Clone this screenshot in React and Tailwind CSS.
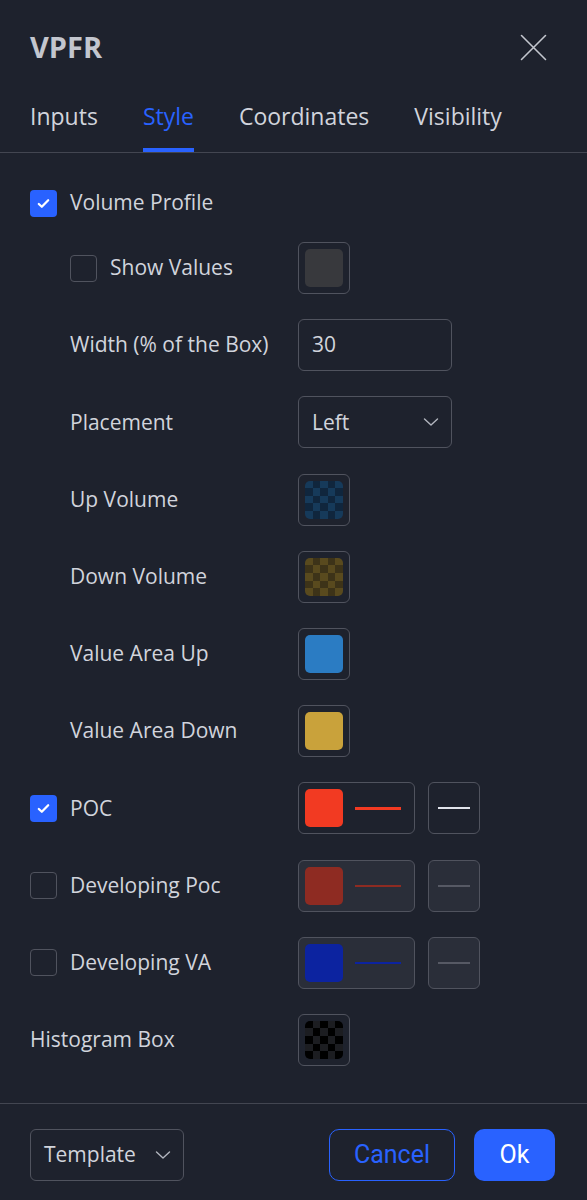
import React from 'react';

const font = { fontFamily: '"Open Sans", "DejaVu Sans", sans-serif' };

function Check({ checked }) {
  if (checked) {
    return (
      <div className="flex h-[27px] w-[27px] shrink-0 items-center justify-center rounded-[4px] bg-[#2962ff]">
        <svg width="15" height="15" viewBox="0 0 16 16" fill="none">
          <path d="M3 8.5l3.2 3L13 4.5" stroke="#fff" strokeWidth="2.4" strokeLinecap="round" strokeLinejoin="round" />
        </svg>
      </div>
    );
  }
  return <div className="h-[27px] w-[27px] shrink-0 rounded-[4px] border-[1.5px] border-[#50535e]" />;
}

function Chevron() {
  return (
    <svg width="16" height="10" viewBox="0 0 16 10" fill="none">
      <path d="M1.5 2l6.5 6 6.5-6" stroke="#b2b5be" strokeWidth="1.4" strokeLinecap="round" strokeLinejoin="round" />
    </svg>
  );
}

// checkerboard swatch, 5x5 cells
function Checker({ a, b }) {
  const cells = [];
  for (let i = 0; i < 25; i++) {
    const dark = (Math.floor(i / 5) + (i % 5)) % 2 === 0;
    cells.push(<div key={i} style={{ background: dark ? a : b }} />);
  }
  return <div className="grid h-[38px] w-[38px] grid-cols-5 grid-rows-5 overflow-hidden rounded-[5px]">{cells}</div>;
}

function Swatch({ children }) {
  return (
    <div className="flex h-[52px] w-[52px] items-center justify-center rounded-[6px] border-[1.5px] border-[#50535e]">
      {children}
    </div>
  );
}

function Solid({ color }) {
  return <div className="h-[38px] w-[38px] rounded-[5px]" style={{ background: color }} />;
}

function LineCombo({ color, disabled, thick }) {
  return (
    <div className="flex items-center gap-[13px]">
      <div
        className={`flex h-[52px] w-[117px] items-center gap-[12px] rounded-[6px] border-[1.5px] border-[#50535e] pl-[6px] ${disabled ? 'bg-[#2a2e39]' : ''}`}
      >
        <div className="h-[38px] w-[38px] rounded-[5px]" style={{ background: color }} />
        <div className={`w-[46px] ${thick ? 'h-[3px]' : 'h-[2px]'}`} style={{ background: color }} />
      </div>
      <div
        className={`flex h-[52px] w-[52px] items-center justify-center rounded-[6px] border-[1.5px] border-[#50535e] ${disabled ? 'bg-[#2a2e39]' : ''}`}
      >
        <div className={`w-[32px] ${disabled ? 'h-[2px] bg-[#565964]' : 'h-[2px] bg-[#e0e3eb]'}`} />
      </div>
    </div>
  );
}

function Row({ label, indent, check, children }) {
  return (
    <div className="flex h-[52px] items-center">
      <div className={`flex w-[268px] items-center gap-[13px] ${indent ? 'pl-[40px]' : ''}`}>
        {check !== undefined && <Check checked={check} />}
        <span className="text-[21px] text-[#d1d4dc]">{label}</span>
      </div>
      {children}
    </div>
  );
}

export default function App() {
  return (
    <div className="h-[1200px] w-[587px] overflow-hidden bg-[#1e222d] text-[#d1d4dc]" style={font}>
      {/* header */}
      <div className="flex h-[94px] items-center justify-between pl-[30px] pr-[40px]">
        <span className="text-[29px] font-bold text-[#c3c6ce]">VPFR</span>
        <svg width="27" height="27" viewBox="0 0 27 27" fill="none">
          <path d="M1.5 1.5l24 24M25.5 1.5l-24 24" stroke="#c3c6ce" strokeWidth="1.6" strokeLinecap="round" />
        </svg>
      </div>

      {/* tabs */}
      <div className="flex h-[59px] items-stretch gap-[45px] border-b-[1.5px] border-[#434651] pl-[30px]">
        {['Inputs', 'Style', 'Coordinates', 'Visibility'].map((t) => (
          <div
            key={t}
            className={`flex items-center border-b-[4px] pb-[10px] text-[23px] ${t === 'Style' ? 'border-[#2962ff] text-[#2962ff]' : 'border-transparent text-[#d1d4dc]'}`}
          >
            {t}
          </div>
        ))}
      </div>

      {/* body */}
      <div className="pl-[30px] pt-[24px]">
        <Row label="Volume Profile" check={true} />
        <div className="mt-[13px] flex flex-col gap-[25.2px]">
          <Row label="Show Values" indent check={false}>
            <Swatch>
              <Solid color="#38393d" />
            </Swatch>
          </Row>
          <Row label="Width (% of the Box)" indent>
            <div className="flex h-[52px] w-[154px] items-center rounded-[6px] border-[1.5px] border-[#50535e] px-[13px] text-[21px]">
              30
            </div>
          </Row>
          <Row label="Placement" indent>
            <div className="flex h-[52px] w-[154px] items-center justify-between rounded-[6px] border-[1.5px] border-[#50535e] pl-[13px] pr-[12px] text-[21px]">
              Left
              <Chevron />
            </div>
          </Row>
          <Row label="Up Volume" indent>
            <Swatch>
              <Checker a="#163a5a" b="#10263d" />
            </Swatch>
          </Row>
          <Row label="Down Volume" indent>
            <Swatch>
              <Checker a="#594a1e" b="#3d3318" />
            </Swatch>
          </Row>
          <Row label="Value Area Up" indent>
            <Swatch>
              <Solid color="#2b7cc3" />
            </Swatch>
          </Row>
          <Row label="Value Area Down" indent>
            <Swatch>
              <Solid color="#c9a23b" />
            </Swatch>
          </Row>
          <Row label="POC" check={true}>
            <LineCombo color="#f23a22" thick />
          </Row>
          <Row label="Developing Poc" check={false}>
            <LineCombo color="#8e2b22" disabled />
          </Row>
          <Row label="Developing VA" check={false}>
            <LineCombo color="#0c23a0" disabled />
          </Row>
          <Row label="Histogram Box">
            <Swatch>
              <Checker a="#000000" b="#1c1d21" />
            </Swatch>
          </Row>
        </div>
      </div>

      {/* footer */}
      <div className="mt-[37px] flex items-center justify-between border-t-[1.5px] border-[#434651] pl-[30px] pr-[32px] pt-[25px]">
        <div className="flex h-[52px] w-[154px] items-center justify-between rounded-[6px] border-[1.5px] border-[#50535e] pl-[13px] pr-[12px] text-[21px]">
          Template
          <Chevron />
        </div>
        <div className="flex gap-[19px]" style={{ fontFamily: 'Roboto, "Liberation Sans", sans-serif' }}>
          <button className="h-[52px] w-[126px] rounded-[10px] border-[1.5px] border-[#2962ff] text-[25px] text-[#2962ff]">
            Cancel
          </button>
          <button className="h-[52px] w-[81px] rounded-[10px] bg-[#2962ff] text-[25px] text-white">Ok</button>
        </div>
      </div>
    </div>
  );
}
